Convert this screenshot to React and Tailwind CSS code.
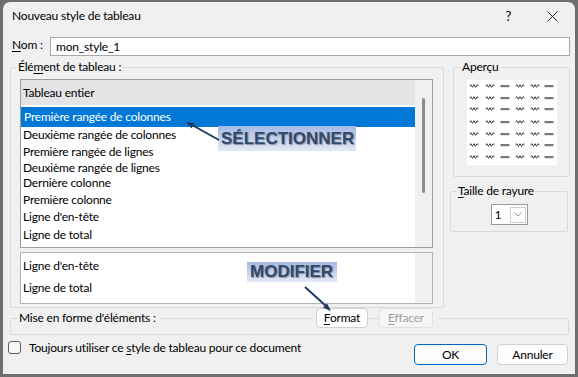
import React from "react";

const U = ({ children }) => (
  <span className="underline underline-offset-2 decoration-1">{children}</span>
);

function Preview() {
  const cols = [7, 23, 38, 53, 68, 82];
  const rows = [6, 18, 29, 42, 54, 65, 77];
  const items = [];
  rows.forEach((y, ri) => {
    cols.forEach((x, ci) => {
      const key = `${ri}-${ci}`;
      if (ci === 2 || ci === 5) {
        items.push(
          <rect key={key} x={x - 4.5} y={y - 1} width="9" height="2.2" fill="#7a7a7a" />
        );
      } else {
        const pts = [
          [x - 4.5, y],
          [x - 3, y - 1.3],
          [x - 1.5, y + 1.3],
          [x, y - 1.3],
          [x + 1.5, y + 1.3],
          [x + 3, y - 1.3],
          [x + 4.5, y],
        ]
          .map((p) => p.join(","))
          .join(" ");
        items.push(
          <polyline key={key} points={pts} fill="none" stroke="#3a3a3a" strokeWidth="1" />
        );
      }
    });
  });
  return (
    <svg width="90" height="85" className="block bg-white">
      {items}
    </svg>
  );
}

const rows1 = [
  { t: "Deuxième rangée de colonnes", c: "h-[16px]" },
  { t: "Première rangée de lignes", c: "h-[17px]" },
  { t: "Deuxième rangée de lignes", c: "h-[15px]" },
  { t: "Dernière colonne", c: "h-[16px]" },
  { t: "Première colonne", c: "h-[18px]" },
  { t: "Ligne d'en-tête", c: "h-[16px]" },
  { t: "Ligne de total", c: "h-[19px]" },
];

export default function App() {
  return (
    <div className="relative w-[578px] h-[377px] bg-[#6e6e6e] pt-[2px] px-[3px] pb-[3px] font-['Lato',sans-serif] text-[12px] tracking-[-0.2px] text-black">
      <div className="h-full bg-[#f0f0f0] rounded-t-[7px] flex flex-col">
        {/* Title bar */}
        <div className="h-[28px] flex items-center pl-[9px] pr-[17px]">
          <span className="leading-[16px]">Nouveau style de tableau</span>
          <span className="ml-auto text-[13px] leading-[16px]">?</span>
          <svg width="11" height="11" viewBox="0 0 11 11" className="ml-[36px]">
            <path d="M0.5 0.5 L10.5 10.5 M10.5 0.5 L0.5 10.5" stroke="#222" strokeWidth="1" />
          </svg>
        </div>

        {/* Nom row */}
        <div className="mt-[7px] h-[19px] flex items-center pl-[9px] pr-[5px]">
          <span className="w-[38px] leading-[16px] -mt-[4px]">
            <U>N</U>om :
          </span>
          <div className="flex-1 h-[19px] bg-white border border-[#a8a8a8] flex items-center pl-[5px]">
            mon_style_1
          </div>
        </div>

        {/* Main row */}
        <div className="mt-[3px] flex pl-[7px]">
          <fieldset className="w-[434px] border border-[#d9d9d9] rounded-[2px]">
            <legend className="ml-[5px] px-[2px] leading-[16px]">
              Élé<U>m</U>ent de tableau :
            </legend>
            <div className="pt-[4px] pl-[9px] pr-[10px] pb-[3px]">
              <div className="h-[169px] border border-[#9c9c9c] bg-white flex">
                <div className="flex-1 flex flex-col">
                  <div className="h-[25px] bg-[#e4e4e7] flex items-center pl-[2px]">Tableau entier</div>
                  <div className="mt-[2px] h-[20px] bg-[#0078d7] text-white flex items-center pl-[3px]">
                    Première rangée de colonnes
                  </div>
                  {rows1.map((r) => (
                    <div key={r.t} className={`${r.c} flex items-center pl-[2px]`}>
                      {r.t}
                    </div>
                  ))}
                </div>
                <div className="w-[17px] bg-[#f0f0f0] flex justify-center">
                  <div className="mt-[18px] w-[3px] h-[95px] rounded-full bg-[#8c8c8c]" />
                </div>
              </div>
              <div className="mt-[4px] h-[52px] border border-[#b4b4b4] bg-white flex">
                <div className="flex-1 flex flex-col pt-[2px]">
                  <div className="h-[22px] flex items-center pl-[2px]">Ligne d'en-tête</div>
                  <div className="h-[22px] flex items-center pl-[2px]">Ligne de total</div>
                </div>
                <div className="w-[17px] bg-[#f0f0f0]" />
              </div>
            </div>
          </fieldset>

          <div className="ml-[6px] w-[120px] flex flex-col">
            <fieldset className="ml-[3px] w-[117px] border border-[#d9d9d9] rounded-[2px]">
              <legend className="ml-[6px] px-[2px] leading-[16px]">Aperçu</legend>
              <div className="pt-[5px] pb-[11px] flex justify-center">
                <Preview />
              </div>
            </fieldset>
            <fieldset className="mt-[6px] w-[118px] border border-[#d9d9d9] rounded-[2px]">
              <legend className="ml-[5px] px-[2px] leading-[16px]">
                <U>T</U>aille de rayure
              </legend>
              <div className="pt-[5px] pb-[6px] flex justify-center">
                <div className="w-[37px] h-[21px] bg-white border border-[#9a9a9a] flex items-center pl-[3px]">
                  <span className="w-[15px]">1</span>
                  <div className="w-[16px] h-[16px] border border-[#cfcfcf] flex items-center justify-center">
                    <svg width="8" height="5" viewBox="0 0 8 5">
                      <path d="M0.5 0.5 L4 4 L7.5 0.5" fill="none" stroke="#9a9a9a" strokeWidth="1" />
                    </svg>
                  </div>
                </div>
              </div>
            </fieldset>
          </div>
        </div>

        {/* Mise en forme */}
        <fieldset className="ml-[7px] w-[559px] border border-[#d9d9d9] rounded-[2px]">
          <legend className="w-full h-[20px] flex items-center">
            <div className="w-[6px] h-px bg-[#d9d9d9]" />
            <span className="px-[2px] leading-[16px]">Mise en forme d'éléments :</span>
            <div className="ml-[3px] flex-1 h-px bg-[#d9d9d9]" />
            <div className="ml-[3px] w-[52px] h-[20px] bg-[#fdfdfd] border border-[#d0d0d0] rounded-[4px] flex items-center justify-center">
              <span>
                <U>F</U>ormat
              </span>
            </div>
            <div className="w-[11px] h-px bg-[#d9d9d9]" />
            <div className="w-[54px] h-[20px] bg-[#f6f6f6] border border-[#e0e0e0] rounded-[4px] flex items-center justify-center text-[#9d9d9d]">
              <span>
                <U>E</U>ffacer
              </span>
            </div>
            <div className="ml-[5px] w-[130px] h-px bg-[#d9d9d9]" />
          </legend>
          <div className="h-[6px]" />
        </fieldset>

        {/* Bottom row */}
        <div className="mt-[6px] flex items-start pl-[5px] pr-[7px]">
          <div className="w-[13px] h-[13px] rounded-[3px] border border-[#5e5e5e] bg-[#f7f7f7]" />
          <span className="ml-[8px] leading-[13px]">
            Toujours utiliser ce <U>s</U>tyle de tableau pour ce document
          </span>
          <div className="ml-auto mt-[3px] flex gap-[10px]">
            <div className="w-[73px] h-[21px] bg-[#fdfdfd] border border-[#0067c0] rounded-[4px] flex items-center justify-center">
              OK
            </div>
            <div className="w-[71px] h-[21px] bg-[#fdfdfd] border border-[#d0d0d0] rounded-[4px] flex items-center justify-center">
              Annuler
            </div>
          </div>
        </div>
      </div>

      {/* Annotations */}
      <div className="absolute left-[218px] top-[126px] w-[138px] h-[25px] bg-gradient-to-b from-[#a6b9e3] to-[#e3e9f6] flex items-center pl-[3px] font-['Liberation_Sans',Arial,sans-serif] font-bold text-[17px] tracking-normal text-[#2f4a6c] [text-shadow:1px_1px_1px_rgba(0,0,0,0.35)]">
        SÉLECTIONNER
      </div>
      <div className="absolute left-[247px] top-[262px] w-[90px] h-[20px] bg-gradient-to-b from-[#a6b9e3] to-[#e3e9f6] flex items-center pl-[3px] font-['Liberation_Sans',Arial,sans-serif] font-bold text-[17px] tracking-normal text-[#2f4a6c] [text-shadow:1px_1px_1px_rgba(0,0,0,0.35)]">
        MODIFIER
      </div>
      <svg className="absolute left-0 top-0 pointer-events-none" width="578" height="377">
        <line x1="219" y1="140" x2="192" y2="125" stroke="#1f3a5c" strokeWidth="2" />
        <polygon points="186,122 194.4,123.2 191.6,128.4" fill="#1f3a5c" />
        <line x1="305" y1="287" x2="326" y2="306" stroke="#1f3a5c" strokeWidth="2" />
        <polygon points="331,311 323.1,307.8 327.1,303.4" fill="#1f3a5c" />
      </svg>
    </div>
  );
}
